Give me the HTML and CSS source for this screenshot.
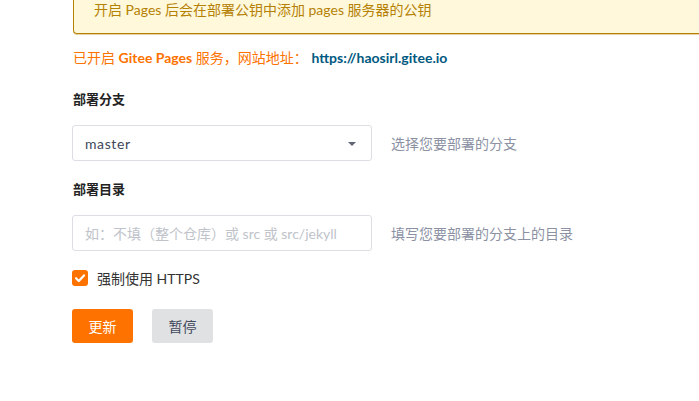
FILE: index.html
```html
<!DOCTYPE html>
<html lang="zh-CN">
<head>
<meta charset="utf-8">
<title>Gitee Pages</title>
<link rel="stylesheet" href="styles.css">
</head>
<body>
<div class="page">
  <div class="message">开启 Pages 后会在部署公钥中添加 pages 服务器的公钥</div>
  <div class="status">已开启 <b>Gitee Pages</b> 服务，网站地址：&nbsp;<a class="site-link" href="#">https://haosirl.gitee.io</a></div>

  <div class="field field-first">
    <label class="field-label">部署分支</label>
    <div class="field-row">
      <div class="select">
        <span class="select-text">master</span>
        <span class="caret"></span>
      </div>
      <span class="hint">选择您要部署的分支</span>
    </div>
  </div>

  <div class="field field-next">
    <label class="field-label">部署目录</label>
    <div class="field-row">
      <div class="input"><span class="placeholder">如：不填（整个仓库）或 src 或 src/jekyll</span></div>
      <span class="hint">填写您要部署的分支上的目录</span>
    </div>
  </div>

  <div class="check-row">
    <span class="checkbox">
      <svg width="12" height="12" viewBox="0 0 12 12"><path d="M2 6.2 L4.8 9 L10 3.4" fill="none" stroke="#fff" stroke-width="2.2" stroke-linecap="round" stroke-linejoin="round"/></svg>
    </span>
    <span class="check-label">强制使用 HTTPS</span>
  </div>

  <div class="actions">
    <button class="btn btn-primary">更新</button>
    <button class="btn btn-default">暂停</button>
  </div>
</div>
</body>
</html>
```

FILE: styles.css
```css
html, body {
  margin: 0;
  padding: 0;
  background: #fff;
  overflow: hidden;
}
body {
  font-family: "Lato", "Noto Sans CJK SC", sans-serif;
  font-size: 14px;
  color: #333;
  width: 699px;
  height: 401px;
}
.page {
  padding-left: 72px;
  overflow: hidden;
  height: 401px;
  box-sizing: border-box;
}
.message {
  margin-top: -14px;
  margin-left: 1px;
  margin-right: -6px;
  padding: 14px 21px;
  line-height: 20px;
  background: #fff8db;
  color: #b58105;
  box-shadow: 0 0 0 1px #b58105 inset, 0 1px 0 0 #e6d4a6;
  border-radius: 4px;
}
.status {
  margin-top: 14px;
  margin-left: 1px;
  line-height: 20px;
  color: #fe7300;
}
.status b {
  font-weight: 700;
}
.site-link {
  color: #005980;
  font-weight: 700;
  text-decoration: none;
}
.field {
  display: flex;
  flex-direction: column;
}
.field-first {
  margin-top: 21px;
}
.field-next {
  margin-top: 18px;
}
.field-label {
  font-size: 13px;
  font-weight: 700;
  line-height: 20px;
  color: #222;
  margin-left: 1px;
}
.field-row {
  display: flex;
  align-items: center;
  margin-top: 16px;
}
.select, .input {
  box-sizing: border-box;
  width: 300px;
  height: 36px;
  border: 1px solid #dcdee3;
  border-radius: 3px;
  display: flex;
  align-items: center;
  padding: 0 14px 0 12px;
}
.select-text {
  flex: 1;
  color: #40485b;
  letter-spacing: 0.6px;
}
.caret {
  width: 0;
  height: 0;
  border-left: 4px solid transparent;
  border-right: 4px solid transparent;
  border-top: 4px solid #5f6573;
  margin-right: 1px;
  margin-top: 2px;
}
.placeholder {
  color: #c0c3ca;
}
.hint {
  margin-left: 19px;
  color: #8c92a4;
}
.check-row {
  display: flex;
  align-items: center;
  margin-top: 17px;
  height: 20px;
}
.checkbox {
  width: 16px;
  height: 16px;
  background: #fe7300;
  border-radius: 3px;
  display: flex;
  align-items: center;
  justify-content: center;
}
.check-label {
  margin-left: 9px;
  color: #333;
}
.actions {
  display: flex;
  gap: 19px;
  margin-top: 21px;
}
.btn {
  font-family: "Lato", "Noto Sans CJK SC", sans-serif;
  font-size: 14px;
  height: 34px;
  width: 61px;
  border: none;
  border-radius: 3px;
  padding: 0;
  cursor: pointer;
}
.btn-primary {
  background: #fe7300;
  color: #fff;
}
.btn-default {
  background: #e0e1e2;
  color: #40485b;
}
```
